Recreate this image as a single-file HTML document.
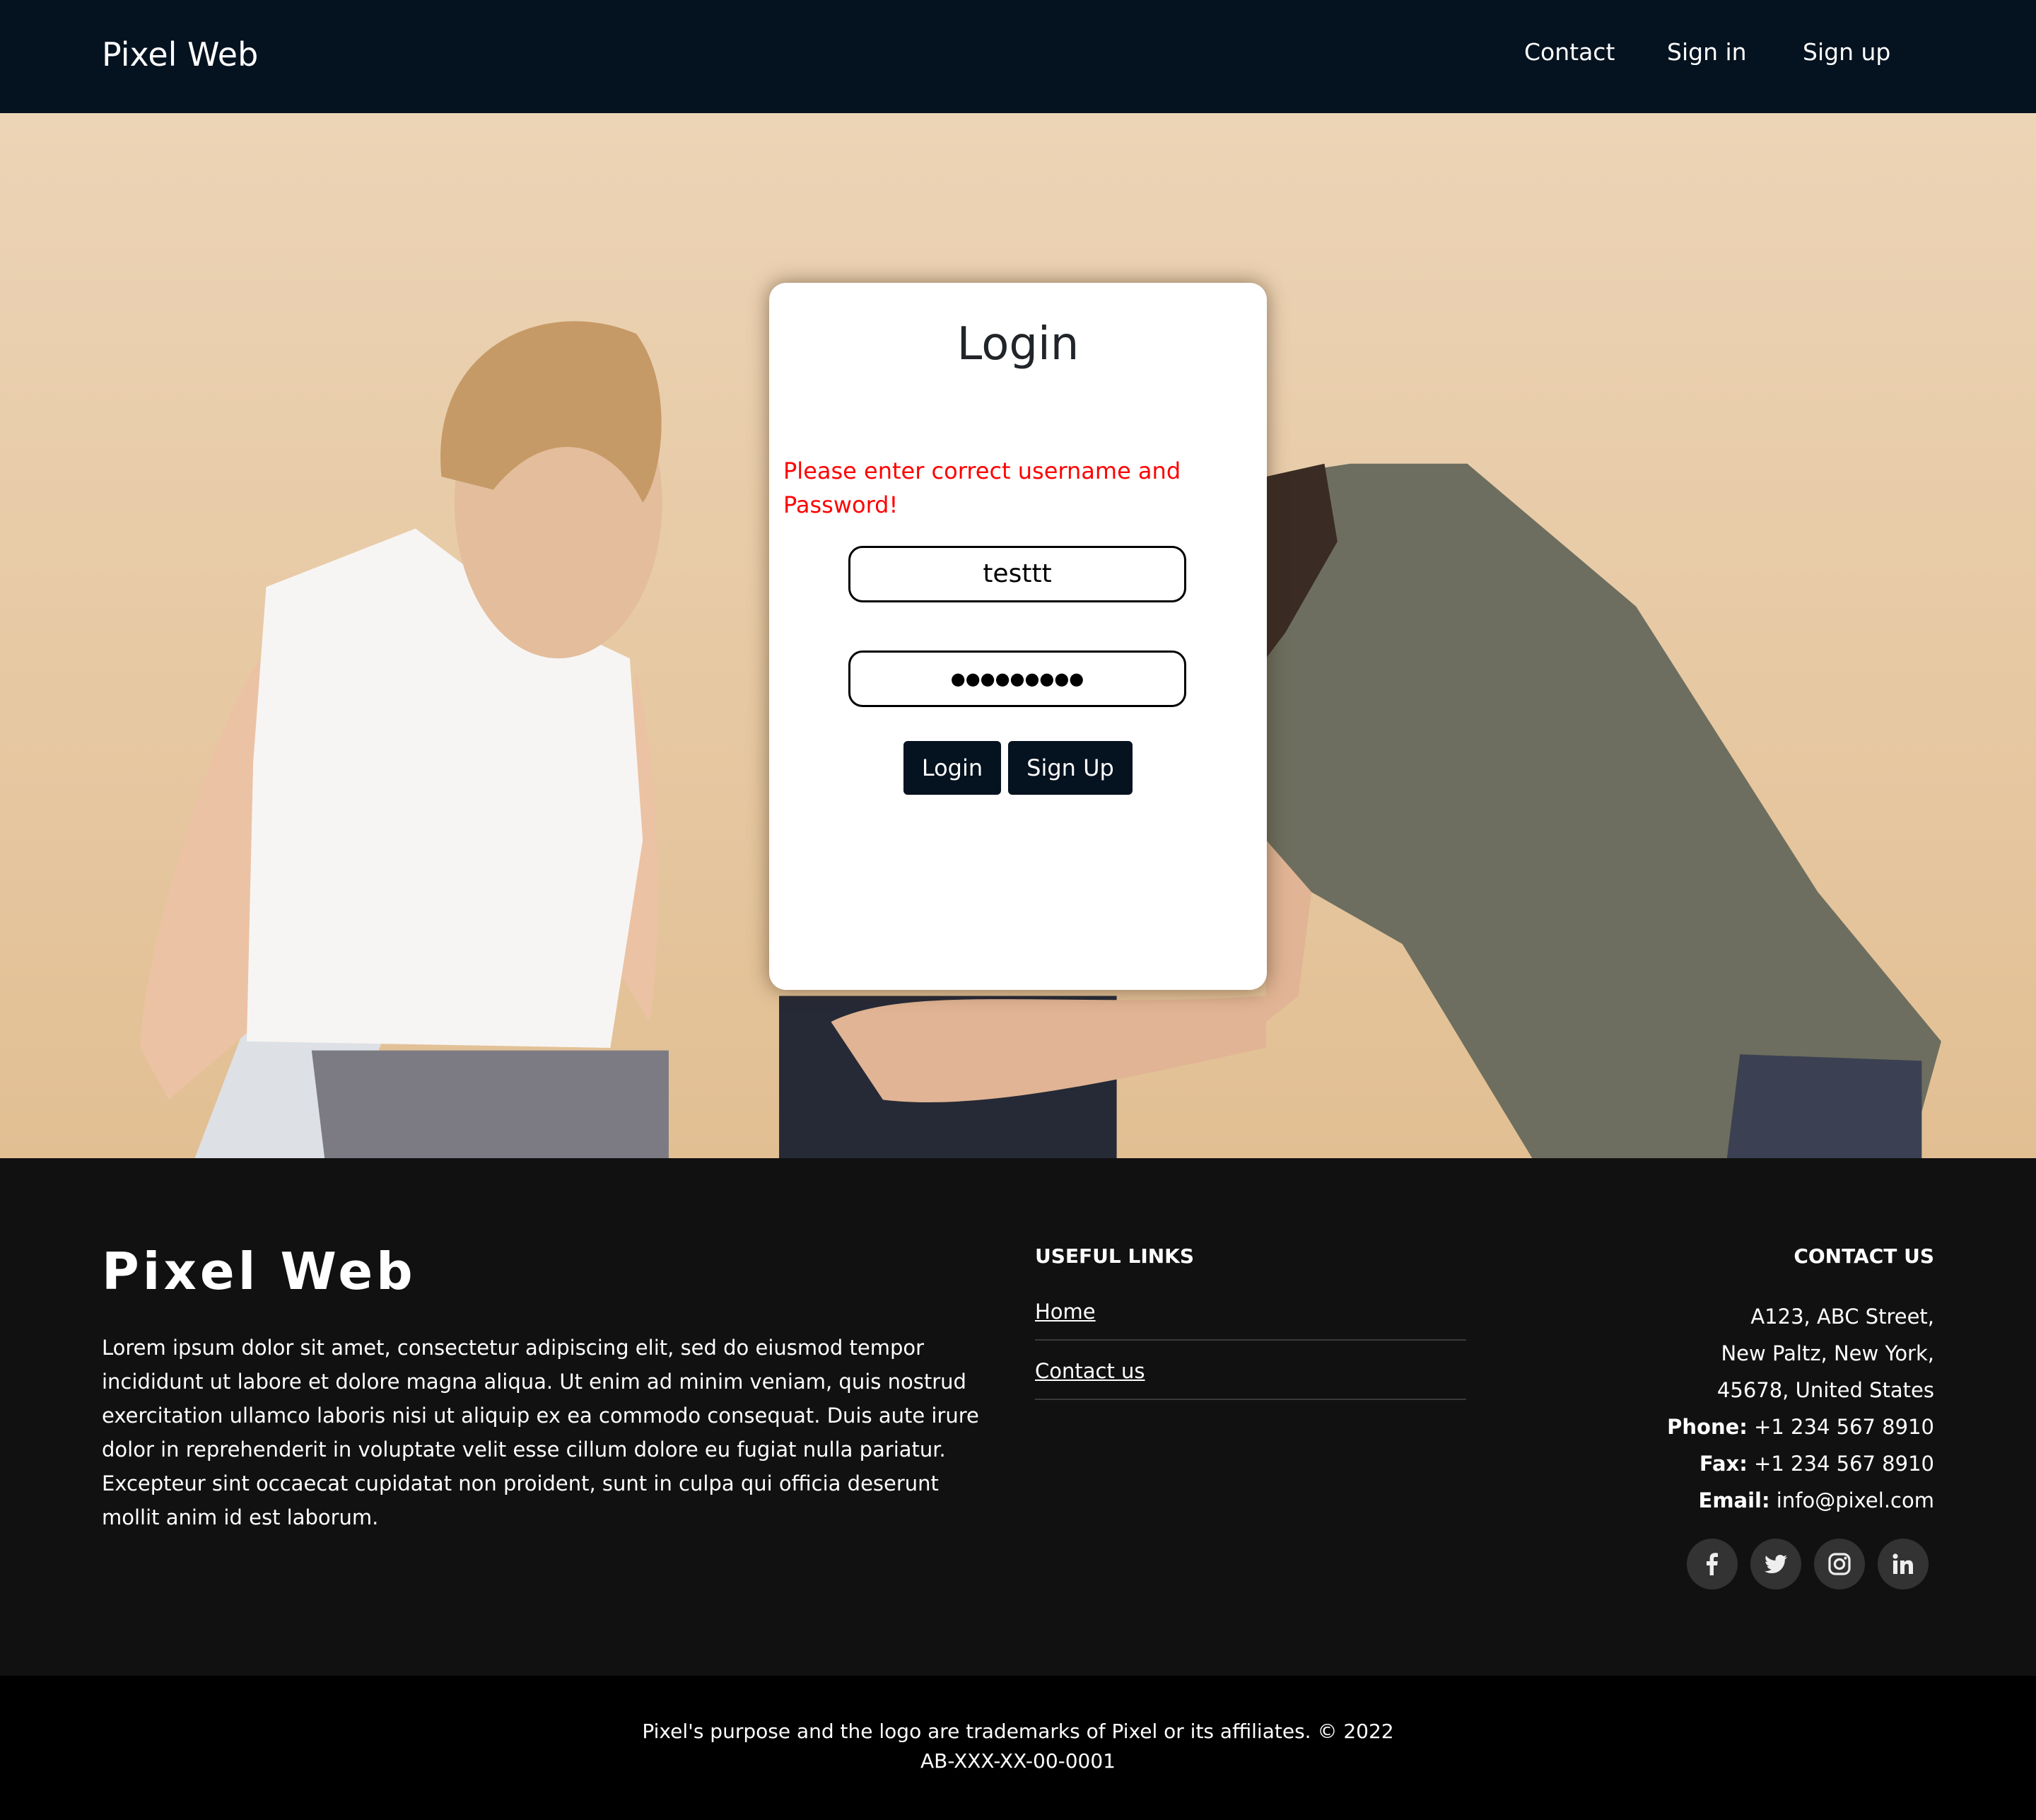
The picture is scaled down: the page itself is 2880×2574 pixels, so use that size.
<!DOCTYPE html>
<html><head><meta charset="utf-8"><style>
*{margin:0;padding:0;box-sizing:border-box}
html,body{width:2880px;height:2574px;overflow:hidden}
#w{zoom:2;width:1440px;height:1287px;position:relative;font-family:"DejaVu Sans","Liberation Sans",sans-serif;background:#000}
.a{position:absolute}
nav{position:absolute;left:0;top:0;width:1440px;height:80px;background:#05121f;color:#fff}
#hero{position:absolute;left:0;top:80px;width:1440px;height:739px;background:linear-gradient(#ecd4b6,#e2bf93);overflow:hidden}
#card{position:absolute;left:544px;top:120px;width:352px;height:500px;background:#fff;border-radius:12px;box-shadow:0 0 14px rgba(60,40,20,.55)}
.inp{position:absolute;left:56px;width:239px;height:40px;border:1.5px solid #000;border-radius:10px;text-align:center;font-size:18px;line-height:37px;color:#000}
.btn{position:absolute;top:324px;height:38px;background:#05121f;color:#fff;border-radius:3px;font-size:16px;line-height:38px;text-align:center}
footer{position:absolute;left:0;top:819px;width:1440px;height:366px;background:#111;color:#fff}
.ci{position:absolute;width:36px;height:36px;border-radius:50%;background:#333;top:269px}
.ci svg{position:absolute;left:9px;top:9px}
</style></head><body><div id="w">
<nav>
<div class="a" style="left:72px;top:25px;font-size:23px">Pixel Web</div>
<div class="a" style="left:1078px;top:27px;font-size:16.5px">Contact</div>
<div class="a" style="left:1179px;top:27px;font-size:16.5px">Sign in</div>
<div class="a" style="left:1275px;top:27px;font-size:16.5px">Sign up</div>
</nav>
<div id="hero">
<svg width="1440" height="739" viewBox="0 0 1568 805" preserveAspectRatio="none" style="position:absolute;left:0;top:0">
<polygon points="150,805 190,700 300,700 260,805" fill="#dde0e4"/>
<path d="M200,420 C160,480 110,650 108,720 L130,760 L200,700 Z" fill="#ecc2a4"/>
<path d="M490,430 C510,520 510,640 500,700 L470,650 Z" fill="#ecc2a4"/>
<path d="M205,365 L320,320 L400,380 L485,420 L495,560 L470,720 L190,715 L195,500 Z" fill="#f7f5f3"/>
<ellipse cx="430" cy="300" rx="80" ry="120" fill="#e3bd9c"/>
<path d="M340,280 C330,180 420,140 490,170 C520,210 510,280 495,300 C470,250 420,240 380,290 Z" fill="#c69a66"/>
<path d="M240,722 L515,722 L515,805 L250,805 Z" fill="#7c7b84"/>
<path d="M600,680 L860,680 L860,805 L600,805 Z" fill="#262a36"/>
<path d="M640,700 C700,670 820,690 975,680 L975,720 C880,740 760,770 680,760 Z" fill="#e0b494"/>
<path d="M975,280 L1040,270 L1130,270 L1260,380 L1400,600 L1495,715 L1470,805 L1180,805 L1080,640 L1010,600 L975,560 Z" fill="#6d6e5f"/>
<path d="M975,280 L1020,270 L1030,330 L990,400 L975,420 Z" fill="#3a2c24"/>
<path d="M1340,725 L1480,730 L1480,805 L1330,805 Z" fill="#3b4152"/>
<path d="M975,560 L1010,600 L1000,680 L975,700 Z" fill="#e0b494"/>
</svg>
<div id="card">
<div class="a" style="left:0;width:352px;top:25px;text-align:center;font-size:32px;color:#212529">Login</div>
<div class="a" style="left:10px;top:121px;width:330px;font-size:16px;line-height:24px;color:#f00">Please enter correct username and Password!</div>
<div class="inp" style="top:186px">testtt</div>
<div class="inp" style="top:260px;font-size:12px;letter-spacing:0px">●●●●●●●●●</div>
<div class="btn" style="left:95px;width:69px">Login</div>
<div class="btn" style="left:169px;width:88px">Sign Up</div>
</div>
</div>
<footer>
<div class="a" style="left:72px;top:59px;font-size:36px;font-weight:bold;letter-spacing:2.5px">Pixel Web</div>
<div class="a" style="left:72px;top:122px;width:630px;font-size:14.5px;line-height:24px">Lorem ipsum dolor sit amet, consectetur adipiscing elit, sed do eiusmod tempor incididunt ut labore et dolore magna aliqua. Ut enim ad minim veniam, quis nostrud exercitation ullamco laboris nisi ut aliquip ex ea commodo consequat. Duis aute irure dolor in reprehenderit in voluptate velit esse cillum dolore eu fugiat nulla pariatur. Excepteur sint occaecat cupidatat non proident, sunt in culpa qui officia deserunt mollit anim id est laborum.</div>
<div class="a" style="left:732px;top:61px;font-size:14px;font-weight:bold">USEFUL LINKS</div>
<div class="a" style="left:732px;top:100px;font-size:14.5px;text-decoration:underline">Home</div>
<div class="a" style="left:732px;top:128px;width:305px;border-top:1px solid #3a3a3a"></div>
<div class="a" style="left:732px;top:142px;font-size:14.5px;text-decoration:underline">Contact us</div>
<div class="a" style="left:732px;top:170px;width:305px;border-top:1px solid #3a3a3a"></div>
<div class="a" style="right:72px;top:61px;font-size:14px;font-weight:bold">CONTACT US</div>
<div class="a" style="right:72px;top:99px;font-size:14.5px;line-height:26px;text-align:right">A123, ABC Street,<br>New Paltz, New York,<br>45678, United States<br><b>Phone:</b> +1 234 567 8910<br><b>Fax:</b> +1 234 567 8910<br><b>Email:</b> info@pixel.com</div>
<div class="ci" style="left:1193px"><svg width="18" height="18" viewBox="0 0 18 18"><path d="M10,17V10h2.5l.4-3H10V5.3c0-.8.3-1.3 1.4-1.3H13V1.3C12.6,1.2 11.8,1.1 11,1.1 9,1.1 7.3,2.300 7.3,4.700V7H5v3h2.3v7Z" fill="#eee"/></svg></div>
<div class="ci" style="left:1238px"><svg width="18" height="18" viewBox="0 0 18 18"><path d="M17,4c-.6.3-1.2.4-1.9.5.7-.4 1.200-1 1.400-1.800-.6.4-1.300.6-2.100.8C13.800,2.800 13,2.500 12,2.500c-1.800,0-3.300,1.500-3.300,3.300 0,.3 0,.5.1.7C6.100,6.400 3.700,5.100 2.100,3.100c-.3.500-.4 1-.4 1.700 0,1.100.6 2.100 1.500 2.700-.5,0-1-.2-1.500-.4 0,1.600 1.100 2.900 2.600 3.200-.5.100-1 .200-1.500.100.400,1.300 1.600,2.300 3.100,2.300C4.700,13.600 3,14.200 1.100,14.100 2.600,15 4.300,15.500 6,15.500c6.100,0 9.400-5 9.400-9.400v-.4C16,5.300 16.600,4.700 17,4Z" fill="#eee"/></svg></div>
<div class="ci" style="left:1283px"><svg width="18" height="18" viewBox="0 0 18 18"><rect x="2" y="2" width="14" height="14" rx="4" fill="none" stroke="#eee" stroke-width="1.6"/><circle cx="9" cy="9" r="3.3" fill="none" stroke="#eee" stroke-width="1.6"/><circle cx="13.2" cy="4.8" r="1" fill="#eee"/></svg></div>
<div class="ci" style="left:1328px"><svg width="18" height="18" viewBox="0 0 18 18"><circle cx="3.5" cy="3.5" r="1.8" fill="#eee"/><rect x="2" y="6.500" width="3" height="9.500" fill="#eee"/><path d="M7,6.500h2.900v1.300C10.400,7 11.400,6.300 12.800,6.300 15.300,6.300 16,7.900 16,10.300V16H13V10.800C13,9.600 12.700,8.900 11.700,8.900 10.600,8.900 10,9.700 10,10.800V16H7Z" fill="#eee"/></svg></div>
</footer>
<div class="a" style="left:0;top:1214px;width:1440px;text-align:center;color:#fff;font-size:14px;line-height:21px">Pixel's purpose and the logo are trademarks of Pixel or its affiliates. © 2022<br>AB-XXX-XX-00-0001</div>
</div></body></html>
